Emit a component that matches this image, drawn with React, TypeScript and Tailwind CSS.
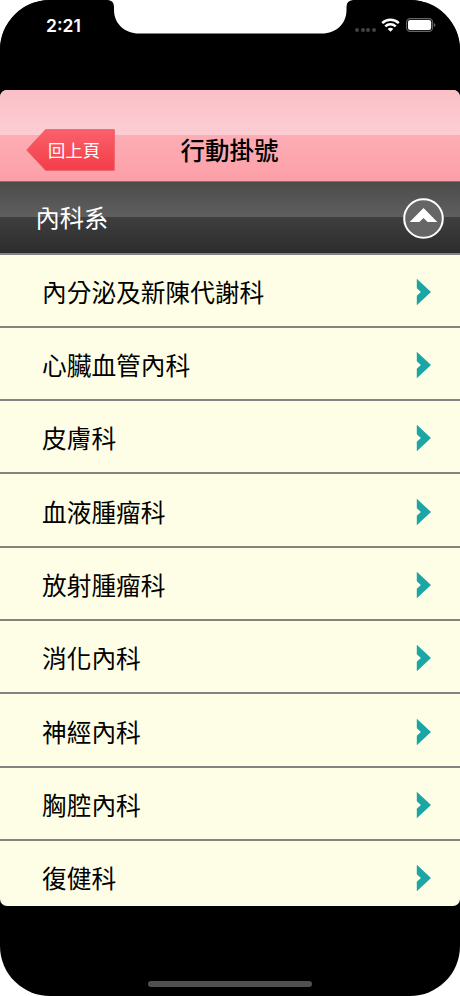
const DEPARTMENTS = [
  "內分泌及新陳代謝科",
  "心臟血管內科",
  "皮膚科",
  "血液腫瘤科",
  "放射腫瘤科",
  "消化內科",
  "神經內科",
  "胸腔內科",
  "復健科",
];

function WifiIcon() {
  return (
    <svg width="19" height="14" viewBox="0 0 19 14" aria-hidden="true">
      <g fill="none" stroke="white" strokeWidth="2.5">
        <path d="M1.2 5.1a12 12 0 0 1 16.6 0" />
        <path d="M4.3 8.4a7.5 7.5 0 0 1 10.4 0" />
      </g>
      <path d="M9.5 13.8 6.7 11a3.9 3.9 0 0 1 5.6 0Z" fill="white" />
    </svg>
  );
}

function BatteryIcon() {
  return (
    <svg width="30" height="14" viewBox="0 0 30 14" aria-hidden="true">
      <rect x="0.6" y="0.6" width="26" height="12.8" rx="3.6" fill="none" stroke="#666" strokeWidth="1.1" />
      <rect x="2" y="2" width="23.2" height="10" rx="2.2" fill="white" />
      <path d="M27.9 4.9v4.2q1.6-.7 1.6-2.1t-1.6-2.1Z" fill="#666" />
    </svg>
  );
}

function StatusBar() {
  return (
    <div className="relative flex h-[90px] shrink-0 items-start justify-between bg-black">
      <svg className="absolute left-[108px] top-0" width="245" height="34" viewBox="0 0 245 34" aria-hidden="true">
        <path d="M0 0Q6 .5 6 7v3C6 24 17 33.5 31 33.5H214C228 33.5 238.500 24 238.500 10V7Q238.500 .5 245 0Z" fill="white" />
      </svg>
      <span className="ml-[46px] mt-[13px] font-['Inter','Liberation_Sans',sans-serif] text-[17.500px] font-semibold leading-[26px] text-white">
        2:21
      </span>
      <div className="mr-[24px] mt-[18px] flex h-[14px] items-center">
        <div className="mr-[5px] mt-[9px] flex gap-[1.700px]">
          <span className="size-[4px] rounded-full bg-[#424242]" />
          <span className="size-[4px] rounded-full bg-[#424242]" />
          <span className="size-[4px] rounded-full bg-[#424242]" />
          <span className="size-[4px] rounded-full bg-[#424242]" />
        </div>
        <WifiIcon />
        <div className="ml-[6px]">
          <BatteryIcon />
        </div>
      </div>
    </div>
  );
}

function BackButton() {
  return (
    <button className="relative flex h-[42px] w-[89px] items-center justify-center">
      <svg className="absolute inset-0" width="89" height="42" viewBox="0 0 89 42" aria-hidden="true">
        <defs>
          <linearGradient id="back-fill" x1="0" y1="0" x2="0" y2="1">
            <stop offset="0" stopColor="#fa616b" />
            <stop offset="1" stopColor="#f33d48" />
          </linearGradient>
        </defs>
        <path d="M.7 21 19.500.7H88.300V41.300H19.500Z" fill="url(#back-fill)" stroke="#e95f69" strokeWidth="1" />
      </svg>
      <span className="relative ml-[8px] text-[17.300px] leading-[24px] text-white">回上頁</span>
    </button>
  );
}

function NavBar() {
  return (
    <header className="flex h-[92px] shrink-0 border-b border-[#c9505b] bg-[linear-gradient(#fbbfc6_0,#fdcdd4_45px,#fdadb4_45px,#fc9fa7_91px)] pt-[39px]">
      <div className="ml-[25.500px] w-[155px]">
        <BackButton />
      </div>
      <h1 className="text-[24.500px] font-medium leading-[42px] text-black">行動掛號</h1>
    </header>
  );
}

function SectionHeader() {
  return (
    <div className="flex h-[72.500px] shrink-0 items-center justify-between border-b-2 border-[#848484] bg-[linear-gradient(#4c4c4c_0,#5f5f5f_35px,#3f3f3f_35px,#2c2c2c_71px)] pl-[35.500px] pr-[16px]">
      <h2 className="text-[24.300px] font-normal leading-[36px] text-white">內科系</h2>
      <svg className="mt-[3px]" width="41" height="41" viewBox="0 0 41 41" aria-hidden="true">
        <circle cx="20.500" cy="20.500" r="19.300" fill="#666" stroke="white" strokeWidth="2" />
        <path d="M20.500 10 34.300 24H24.600L20.500 20 16.400 24H6.700Z" fill="white" />
      </svg>
    </div>
  );
}

function DepartmentRow({ name }: { name: string }) {
  return (
    <li className="flex h-[73.330px] shrink-0 items-center justify-between border-b-2 border-[#838380] pl-[42px] pr-[28px]">
      <span className="mt-px text-[24.700px] leading-[36px] text-black">{name}</span>
      <svg className="mt-[3px]" width="16" height="28" viewBox="0 0 16 28" aria-hidden="true">
        <path d="M.8.7 15 14 .8 27.300V17.800L4.900 14 .8 10.200Z" fill="#1ba5a4" />
      </svg>
    </li>
  );
}

export default function App() {
  return (
    <div className="h-[996px] w-[460px] bg-white font-['Noto_Sans_CJK_TC',sans-serif]">
      <div className="flex h-full flex-col overflow-hidden rounded-[50px] bg-black">
        <StatusBar />
        <main className="flex h-[816px] shrink-0 flex-col overflow-hidden rounded-[7px] bg-[#fefee6]">
          <NavBar />
          <SectionHeader />
          <ul className="flex flex-col">
            {DEPARTMENTS.map((name) => (
              <DepartmentRow key={name} name={name} />
            ))}
          </ul>
        </main>
        <div className="flex flex-1 items-end justify-center pb-[9px]">
          <div className="h-[6px] w-[164px] rounded-full bg-[#505050]" />
        </div>
      </div>
    </div>
  );
}
